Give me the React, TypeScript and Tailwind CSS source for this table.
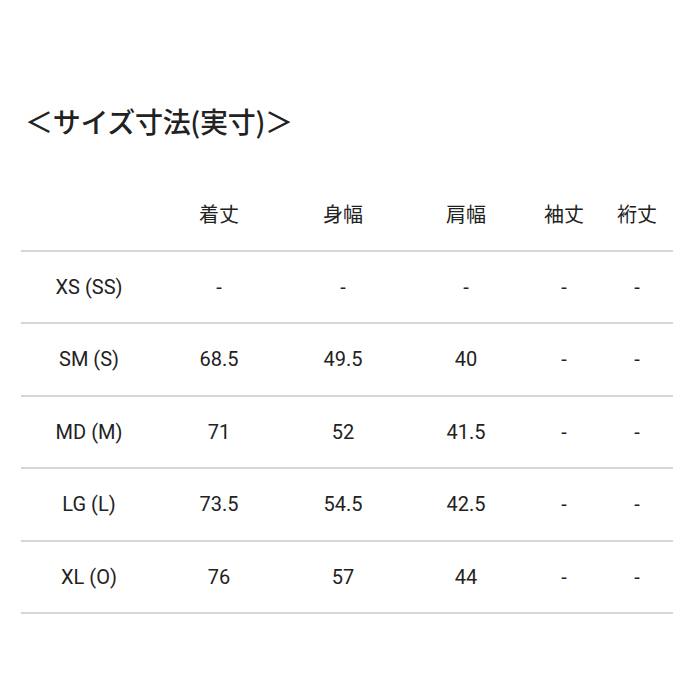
const headers = ["", "着丈", "身幅", "肩幅", "袖丈", "裄丈"];

const rows = [
  ["XS (SS)", "-", "-", "-", "-", "-"],
  ["SM (S)", "68.5", "49.5", "40", "-", "-"],
  ["MD (M)", "71", "52", "41.5", "-", "-"],
  ["LG (L)", "73.5", "54.5", "42.5", "-", "-"],
  ["XL (O)", "76", "57", "44", "-", "-"],
];

const cols = "grid grid-cols-[136px_124px_124px_122px_74px_72px]";

export default function App() {
  return (
    <div className="w-[700px] h-[700px] bg-white pt-[103px] pl-[21px] text-[#222]">
      <h1 className="pl-[4px] text-[28px] leading-[36px] font-medium tracking-[-0.3px] font-['Noto_Sans_CJK_JP',sans-serif]">
        ＜サイズ寸法(実寸)＞
      </h1>
      <div className="mt-[40px] w-[652px]">
        <div className={`${cols} h-[72.5px] border-b-2 border-[#d6d6d6] items-center text-[20px] font-['Noto_Sans_CJK_JP',sans-serif]`}>
          {headers.map((h, i) => (
            <div key={i} className="text-center">
              {h}
            </div>
          ))}
        </div>
        {rows.map((r) => (
          <div
            key={r[0]}
            className={`${cols} h-[72.5px] border-b-2 border-[#d6d6d6] items-center text-[20px] font-['Roboto',sans-serif]`}
          >
            {r.map((c, i) => (
              <div key={i} className="text-center">
                {c}
              </div>
            ))}
          </div>
        ))}
      </div>
    </div>
  );
}
